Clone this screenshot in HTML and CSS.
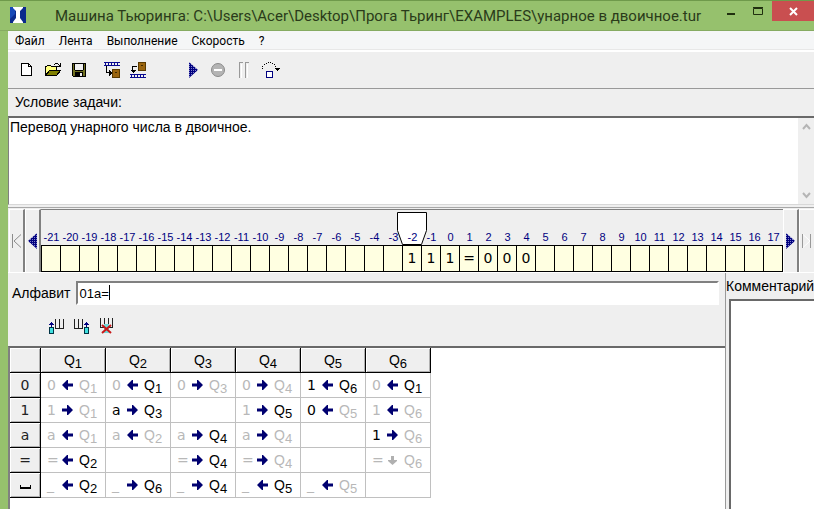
FILE: index.html
```html
<!DOCTYPE html>
<html lang="ru">
<head>
  <meta charset="UTF-8">
  <meta name="viewport" content="width=device-width">
  <title>Машина Тьюринга</title>
  <link rel="stylesheet" href="styles.css">
</head>

<body>

<svg width="0" height="0" class="defs" aria-hidden="true">
  <symbol id="left" viewBox="0 0 11 10"><path d="M11 3.500H6V0H5L0 5l5 5h1V6.500h5z"/></symbol>
  <symbol id="right" viewBox="0 0 11 10"><path d="M0 3.500h5V0h1l5 5-5 5H5V6.500H0z"/></symbol>
  <symbol id="stay" viewBox="0 0 11 10"><path d="M4 1h3v4h3v1L5.500 10 1 6V5h3z"/></symbol>
  <pattern id="dots" width="2" height="2" patternUnits="userSpaceOnUse">
    <rect width="2" height="2" fill="#000080"/>
    <rect width="1" height="1" fill="#8080c8"/>
  </pattern>
</svg>

<header class="title-bar">
  <svg class="logo" width="16" height="16" viewBox="0 0 16 16">
    <rect width="16" height="16" fill="#0b2a8c"/>
    <path d="M0 0h5v7l-5 5z" fill="#1648b8"/>
    <path d="M3 0h10v1l-3 3v7l3 4v1H3v-1l3-4V4L3 1z" fill="#fff"/>
  </svg>
  <h1>Машина Тьюринга: C:\Users\Acer\Desktop\Прога Тьринг\EXAMPLES\унарное в двоичное.tur</h1>
  <button class="win" aria-label="Свернуть"><svg width="11" height="9" viewBox="0 0 11 9"><path d="M1 6h8v2H1z" fill="#20300f"/></svg></button>
  <button class="win" aria-label="Развернуть"><svg width="11" height="9" viewBox="0 0 11 9"><path d="M.5 1.500h9v6h-9zM0 .5h10" fill="none" stroke="#20300f"/></svg></button>
  <button class="win close" aria-label="Закрыть"><svg width="9" height="9" viewBox="0 0 9 9"><path d="M1 1l7 7M8 1L1 8" stroke="#fff" stroke-width="2"/></svg></button>
</header>

<main>
<nav class="menu">
  <button>Файл</button>
  <button>Лента</button>
  <button>Выполнение</button>
  <button>Скорость</button>
  <button>?</button>
</nav>

<div class="toolbar">
  <button aria-label="Новый"><svg width="20" height="20" viewBox="0 0 20 20" shape-rendering="crispEdges">
    <path d="M4.500 3.500h7l3 3v9h-10z" fill="#fff" stroke="#000"/><path d="M11.500 3.500v3h3" fill="none" stroke="#000"/></svg></button>
  <button aria-label="Открыть"><svg width="20" height="20" viewBox="0 0 20 20" shape-rendering="crispEdges">
    <path d="M2.500 15.500v-9h1l1-1h3l1 1h5v3" fill="#ffff80" stroke="#000"/>
    <path d="M2.500 15.500l4-5h11l-4 5z" fill="#808000" stroke="#000"/>
    <path d="M11 4h1V3h3v1h1v1h1V3h1v4h-4V6h2V5h-1V4h-3v1h-1z" fill="#000"/></svg></button>
  <button aria-label="Сохранить"><svg width="20" height="20" viewBox="0 0 20 20" shape-rendering="crispEdges">
    <path d="M3.500 3.500h13v13h-12l-1-1z" fill="#707020" stroke="#000"/>
    <path d="M6 4h8v6H6z" fill="#efefef"/><path d="M5.500 4v6M14.500 4v6M6 10.500h8" stroke="#000"/>
    <path d="M6 12h8v5H6z" fill="#000"/><path d="M11 13h2v3h-2z" fill="#efefef"/></svg></button>
  <i class="gap"></i>
  <button aria-label="Сохранить ленту"><svg width="20" height="20" viewBox="0 0 20 20" shape-rendering="crispEdges">
    <path d="M3 2.500h16M3 5.500h16" stroke="#0a0a90"/><path d="M4.500 3v2M7.500 3v2M10.500 3v2M13.500 3v2M16.500 3v2" stroke="#0a0a90"/>
    <path d="M5 6v7h3v3l3-3-3-4v3H6V6z" fill="#000"/>
    <path d="M11.500 9.500h7v8h-7z" fill="#9a6510" stroke="#5a3a00"/><path d="M14 12h2v1h-2z" fill="#402800"/></svg></button>
  <button aria-label="Восстановить ленту"><svg width="20" height="20" viewBox="0 0 20 20" shape-rendering="crispEdges">
    <path d="M3 14.500h16M3 17.500h16" stroke="#0a0a90"/><path d="M4.500 15v2M7.500 15v2M10.500 15v2M13.500 15v2M16.500 15v2" stroke="#0a0a90"/>
    <path d="M10 6H5v4H3l3 3 3-3H6V7h4z" fill="#000"/>
    <path d="M11.500 2.500h7v8h-7z" fill="#9a6510" stroke="#5a3a00"/><path d="M14 5h2v1h-2z" fill="#402800"/></svg></button>
  <i class="gap wide"></i>
  <button aria-label="Пуск"><svg width="20" height="20" viewBox="0 0 20 20"><path d="M6 2l9 8-9 8z" fill="url(#dots)"/></svg></button>
  <button aria-label="Стоп"><svg width="20" height="20" viewBox="0 0 20 20">
    <circle cx="9" cy="10" r="6.500" fill="#b4b4b4" stroke="#8a8a8a"/><path d="M5 9h8v2H5z" fill="#fff"/></svg></button>
  <button aria-label="Пауза"><svg width="20" height="20" viewBox="0 0 20 20" shape-rendering="crispEdges">
    <path d="M6.500 18V3.500M12.500 18V3.500" fill="none" stroke="#fff"/>
    <path d="M4.500 18V2.500h3M10.500 18V2.500h3" fill="none" stroke="#999"/></svg></button>
  <button aria-label="Шаг"><svg width="20" height="20" viewBox="0 0 20 20" shape-rendering="crispEdges">
    <path d="M1 8h1v1H1zM1 6h1v1H1zM3 4h1v1H3zM5 3h1v1H5zM7 2h1v1H7zM9 2h1v1H9zM11 3h1v1h-1zM13 4h1v1h-1zM14 6h1v1h-1zM14 8h5v1h-1v1h-1v1h-1v-1h-1V9h-1z" fill="#000"/>
    <path d="M5.500 11.500h6v6h-6z" fill="#fff" stroke="#000080"/></svg></button>
</div>

<section class="task">
  <label for="task">Условие задачи:</label>
  <div class="memo">
    <textarea id="task" spellcheck="false">Перевод унарного числа в двоичное.</textarea>
    <div class="scroll">
      <button aria-label="Вверх"><svg width="9" height="8" viewBox="0 0 9 8"><path d="M1 6l3.500-4L8 6" fill="none" stroke="#b5b5b5" stroke-width="2"/></svg></button>
      <button aria-label="Вниз"><svg width="9" height="8" viewBox="0 0 9 8"><path d="M1 2l3.500 4L8 2" fill="none" stroke="#b5b5b5" stroke-width="2"/></svg></button>
    </div>
  </div>
</section>

<section class="tape">
  <button aria-label="В начало"><svg width="10" height="16" viewBox="0 0 10 16"><path d="M.5 1v14M9 1.500L2 8l7 6.500" fill="none" stroke="#8c8c8c"/></svg></button>
  <button aria-label="Влево"><svg width="9" height="16" viewBox="0 0 9 16"><path d="M9 0v16L0 8z" fill="url(#dots)"/></svg></button>
  <ol class="cells">
    <li>-21<b></b></li>
    <li>-20<b></b></li>
    <li>-19<b></b></li>
    <li>-18<b></b></li>
    <li>-17<b></b></li>
    <li>-16<b></b></li>
    <li>-15<b></b></li>
    <li>-14<b></b></li>
    <li>-13<b></b></li>
    <li>-12<b></b></li>
    <li>-11<b></b></li>
    <li>-10<b></b></li>
    <li>-9<b></b></li>
    <li>-8<b></b></li>
    <li>-7<b></b></li>
    <li>-6<b></b></li>
    <li>-5<b></b></li>
    <li>-4<b></b></li>
    <li>-3<b></b></li>
    <li class="current"><svg class="head" width="31" height="34" viewBox="0 0 31 34"><path d="M.5.5h29v18l-5 14h-19l-5-14z" fill="#fff" stroke="#000"/></svg><span>-2</span><b>1</b></li>
    <li>-1<b>1</b></li>
    <li>0<b>1</b></li>
    <li>1<b>=</b></li>
    <li>2<b>0</b></li>
    <li>3<b>0</b></li>
    <li>4<b>0</b></li>
    <li>5<b></b></li>
    <li>6<b></b></li>
    <li>7<b></b></li>
    <li>8<b></b></li>
    <li>9<b></b></li>
    <li>10<b></b></li>
    <li>11<b></b></li>
    <li>12<b></b></li>
    <li>13<b></b></li>
    <li>14<b></b></li>
    <li>15<b></b></li>
    <li>16<b></b></li>
    <li>17<b></b></li>
  </ol>
  <button aria-label="Вправо"><svg width="9" height="16" viewBox="0 0 9 16"><path d="M0 0v16l9-8z" fill="url(#dots)"/></svg></button>
  <button class="end" aria-label="В конец"><svg width="10" height="16" viewBox="0 0 10 16"><path d="M1 1.500L8 8l-7 6.500" fill="none" stroke="#fff"/><path d="M.5 1v14M8.500 1v14" stroke="#999"/></svg></button>
</section>

<div class="work">
  <section class="program">
    <div class="alphabet">
      <label for="alphabet">Алфавит</label>
      <div class="field"><input type="text" id="alphabet" value="01a="><i class="caret"></i></div>
    </div>
    <div class="columns">
      <button aria-label="Добавить столбец слева"><svg width="16" height="18" viewBox="0 0 16 18" shape-rendering="crispEdges">
        <path d="M6.500 2v9h8V2M10.500 2v9" fill="none" stroke="#222"/>
        <path d="M2 5h1v1h1v1h1v1H3v2H2V8H0V7h1V6h1z" fill="#000080"/><path d="M.5 10.500h4v6h-4z" fill="#40e0e0" stroke="#034"/></svg></button>
      <button aria-label="Добавить столбец справа"><svg width="16" height="18" viewBox="0 0 16 18" shape-rendering="crispEdges">
        <path d="M.5 2v9h8V2M4.500 2v9" fill="none" stroke="#222"/>
        <path d="M12 5h1v1h1v1h1v1h-2v2h-1V8h-2V7h1V6h1z" fill="#000080"/><path d="M10.500 10.500h4v6h-4z" fill="#40e0e0" stroke="#034"/></svg></button>
      <button aria-label="Удалить столбец"><svg width="16" height="18" viewBox="0 0 16 18">
        <path d="M1.500 1v9h12V1M5.500 1v9M9.500 1v9" fill="none" stroke="#222" shape-rendering="crispEdges"/>
        <path d="M5 7h5v9H5z" fill="#70d8d8"/><path d="M3 8l9 8M12 8l-9 8" stroke="#c81818" stroke-width="2"/></svg></button>
    </div>
    <div class="sheet">
    <table>
      <tr><th></th><th>Q<sub>1</sub></th><th>Q<sub>2</sub></th><th>Q<sub>3</sub></th><th>Q<sub>4</sub></th><th>Q<sub>5</sub></th><th>Q<sub>6</sub></th></tr>
      <tr>
        <th>0</th>
        <td><div><i>0</i><svg><use href="#left"/></svg><i>Q<sub>1</sub></i></div></td>
        <td><div><i>0</i><svg><use href="#left"/></svg><b>Q<sub>1</sub></b></div></td>
        <td><div><i>0</i><svg><use href="#right"/></svg><i>Q<sub>3</sub></i></div></td>
        <td><div><i>0</i><svg><use href="#right"/></svg><i>Q<sub>4</sub></i></div></td>
        <td><div><b>1</b><svg><use href="#left"/></svg><b>Q<sub>6</sub></b></div></td>
        <td><div><i>0</i><svg><use href="#left"/></svg><b>Q<sub>1</sub></b></div></td>
      </tr>
      <tr>
        <th>1</th>
        <td><div><i>1</i><svg><use href="#right"/></svg><i>Q<sub>1</sub></i></div></td>
        <td><div><b>a</b><svg><use href="#right"/></svg><b>Q<sub>3</sub></b></div></td>
        <td></td>
        <td><div><i>1</i><svg><use href="#right"/></svg><b>Q<sub>5</sub></b></div></td>
        <td><div><b>0</b><svg><use href="#left"/></svg><i>Q<sub>5</sub></i></div></td>
        <td><div><i>1</i><svg><use href="#left"/></svg><i>Q<sub>6</sub></i></div></td>
      </tr>
      <tr>
        <th>a</th>
        <td><div><i>a</i><svg><use href="#left"/></svg><i>Q<sub>1</sub></i></div></td>
        <td><div><i>a</i><svg><use href="#left"/></svg><i>Q<sub>2</sub></i></div></td>
        <td><div><i>a</i><svg><use href="#right"/></svg><b>Q<sub>4</sub></b></div></td>
        <td><div><i>a</i><svg><use href="#right"/></svg><i>Q<sub>4</sub></i></div></td>
        <td></td>
        <td><div><b>1</b><svg><use href="#right"/></svg><i>Q<sub>6</sub></i></div></td>
      </tr>
      <tr>
        <th>=</th>
        <td><div><i>=</i><svg><use href="#left"/></svg><b>Q<sub>2</sub></b></div></td>
        <td></td>
        <td><div><i>=</i><svg><use href="#right"/></svg><b>Q<sub>4</sub></b></div></td>
        <td><div><i>=</i><svg><use href="#right"/></svg><i>Q<sub>4</sub></i></div></td>
        <td></td>
        <td><div><i>=</i><svg class="dim"><use href="#stay"/></svg><i>Q<sub>6</sub></i></div></td>
      </tr>
      <tr>
        <th><svg class="blank" width="11" height="4" viewBox="0 0 11 4"><path d="M0 0h1v2h9V0h1v4H0z"/></svg></th>
        <td><div><i>_</i><svg><use href="#left"/></svg><b>Q<sub>2</sub></b></div></td>
        <td><div><i>_</i><svg><use href="#right"/></svg><b>Q<sub>6</sub></b></div></td>
        <td><div><i>_</i><svg><use href="#right"/></svg><b>Q<sub>4</sub></b></div></td>
        <td><div><i>_</i><svg><use href="#left"/></svg><b>Q<sub>5</sub></b></div></td>
        <td><div><i>_</i><svg><use href="#left"/></svg><i>Q<sub>5</sub></i></div></td>
        <td></td>
      </tr>
    </table>
    </div>
  </section>
  <section class="comment">
    <label for="comment">Комментарий</label>
    <textarea id="comment"></textarea>
  </section>
</div>
</main>

</body>
</html>
```
FILE: styles.css
```css
* { box-sizing: border-box; }
body {
  margin: 0;
  height: 100vh;
  display: flex;
  flex-direction: column;
  overflow: hidden;
  background: #96c16d;
  font: 14px "Liberation Sans", Arial, sans-serif;
  color: #000;
}
.defs { position: absolute; }
button {
  margin: 0;
  padding: 0;
  border: 0;
  background: none;
  font: inherit;
  color: inherit;
}
textarea, input { font: inherit; color: inherit; }
svg { display: block; flex: none; }

/* title bar */
.title-bar {
  flex: none;
  height: 31px;
  display: flex;
  border-top: 1px solid #6f9a4b;
  border-bottom: 1px solid #86ab62;
}
.logo { margin: 6px 29px 0 10px; }
h1 {
  flex: 1;
  min-width: 0;
  margin: 0;
  font: 15px/30px Roboto, "Noto Sans", sans-serif;
  color: #2a3b1a;
  white-space: nowrap;
  overflow: hidden;
}
.win {
  width: 27px;
  height: 20px;
  display: flex;
  align-items: center;
  justify-content: center;
}
.close { width: 42px; background: #c94f50; }

main {
  flex: 1;
  min-height: 0;
  margin-left: 8px;
  display: flex;
  flex-direction: column;
  background: #efefef;
}

/* menu and toolbar */
.menu {
  display: flex;
  height: 19px;
  background: #f5f6f7;
  border-bottom: 1px solid #e8e8e8;
  font: 12px/20px Roboto, "Noto Sans", sans-serif;
}
.menu button { padding: 0 7px; }
.toolbar {
  display: flex;
  align-items: center;
  height: 39px;
  padding-left: 6px;
  border-top: 2px solid #fff;
  border-bottom: 1px solid #999;
}
.toolbar button {
  width: 26px;
  display: flex;
  justify-content: center;
}
.gap { width: 6px; }
.gap.wide { width: 30px; }

/* task text */
.task label {
  display: block;
  padding-left: 7px;
  line-height: 27px;
}
.memo {
  display: flex;
  height: 89px;
  background: #fff;
  border: 1px solid #808080;
  border-top: 2px solid #696969;
  border-right: 0;
  border-bottom-color: #d8d8d8;
}
textarea {
  flex: 1;
  min-width: 0;
  margin: 0;
  padding: 1px;
  border: 0;
  resize: none;
  outline: 0;
  background: #fff;
}
.scroll {
  width: 16px;
  display: flex;
  flex-direction: column;
  justify-content: space-between;
  align-items: center;
  padding: 5px 0;
  background: #efefef;
}

/* tape */
.tape {
  flex: none;
  display: flex;
  height: 66px;
  margin-top: 2px;
  padding-left: 1px;
  border-top: 1px solid #a8a8a8;
  border-bottom: 1px solid #fff;
}
.tape button {
  width: 16px;
  margin-top: 1px;
  display: flex;
  align-items: center;
  justify-content: center;
  border: 1px solid #fff;
  border-right: 2px solid #808080;
  border-bottom: 0;
}
.tape .end { width: 15px; border-right: 0; }
.cells {
  flex: 1;
  min-width: 0;
  display: flex;
  margin: 1px 0 0;
  padding: 0 0 0 1px;
  list-style: none;
  overflow: hidden;
  border-top: 1px solid #808080;
  font-size: 11px;
  color: #000080;
}
.cells li {
  flex: none;
  width: 19px;
  padding-top: 19px;
  line-height: 16px;
  display: flex;
  flex-direction: column;
  align-items: center;
}
.cells b {
  align-self: stretch;
  height: 27px;
  border: 1px solid #000;
  border-left: 0;
  background: #ffffe1;
  color: #000;
  font: 14px/25px "DejaVu Sans", sans-serif;
  text-align: center;
}
.cells li:first-child b { margin-left: -1px; border-left: 1px solid #000; }
.cells .current { position: relative; }
.current span { z-index: 1; }
.head { position: absolute; left: -6px; top: 2px; }

/* program */
.work {
  flex: 1;
  min-height: 0;
  display: flex;
}
.program {
  flex: 1;
  min-width: 0;
  display: flex;
  flex-direction: column;
  border-right: 1px solid #999;
}
.alphabet {
  display: flex;
  align-items: center;
  gap: 6px;
  padding: 8px 6px 0 4px;
}
.field { flex: 1; position: relative; }
input {
  width: 100%;
  height: 24px;
  display: block;
  padding: 0 1px;
  border: 2px solid;
  border-color: #808080 #fff #fff #808080;
  border-radius: 0;
  outline: 0;
  font-size: 13px;
}
.caret {
  position: absolute;
  left: 33px;
  top: 4px;
  width: 1px;
  height: 15px;
  background: #000;
}
.columns {
  display: flex;
  gap: 9px;
  padding: 12px 0 11px 41px;
}
.sheet {
  flex: 1;
  min-height: 0;
  overflow: hidden;
  background: #fff;
  border-top: 2px solid #696969;
  border-left: 2px solid #808080;
}
table {
  border-spacing: 0;
  border-collapse: separate;
  table-layout: fixed;
  width: 421px;
}
th, td {
  height: 25px;
  padding: 0;
  line-height: 20px;
  border-right: 1px solid #c0c0c0;
  border-bottom: 1px solid #c0c0c0;
}
th {
  background: #efefef;
  font-weight: normal;
  border-color: #000;
  box-shadow: inset 1px 1px #fff, inset -1px -1px #b0b0b0;
}
th:first-child {
  width: 31px;
  font: 14px/20px "DejaVu Sans", sans-serif;
  color: #222;
}
sub {
  font-size: 13px;
  line-height: 0;
  vertical-align: -3px;
}
td div {
  display: grid;
  grid-template-columns: 15px 17px auto;
  align-items: center;
  padding-left: 6px;
}
td i, td b { font-style: normal; font-weight: normal; }
td i { color: #b8b8b8; }
td div > :first-child { font: 14px/20px "DejaVu Sans", sans-serif; }
td svg { width: 11px; height: 10px; fill: #000070; }
td .dim { fill: #b0b0b0; }
.blank { margin: 4px auto 0; }

/* comment */
.comment {
  width: 88px;
  display: flex;
  flex-direction: column;
  overflow: hidden;
}
.comment label { line-height: 26px; white-space: nowrap; }
.comment textarea {
  margin-left: 3px;
  border: 2px solid #696969;
  border-right: 0;
  border-bottom: 0;
}
```
